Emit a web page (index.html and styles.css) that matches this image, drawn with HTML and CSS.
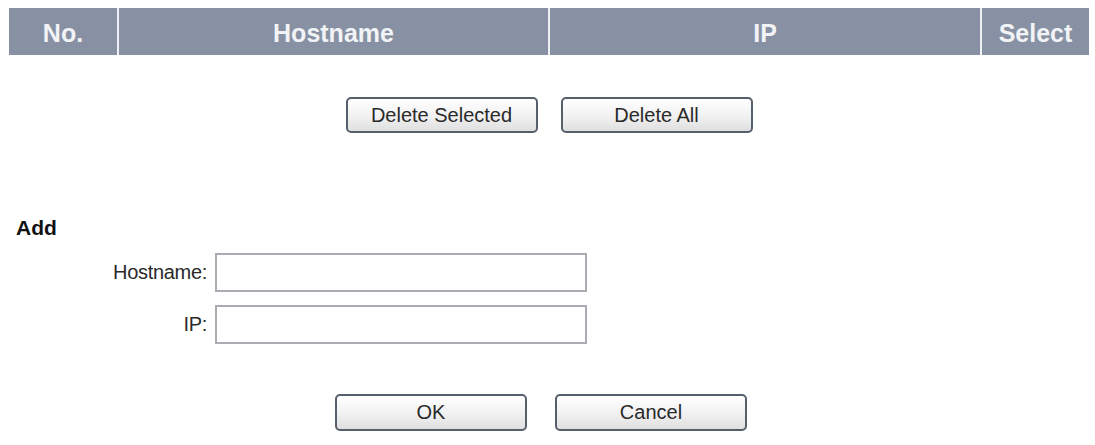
FILE: index.html
```html
<!DOCTYPE html>
<html>
  <head>
    <title>Host Table</title>
    <link rel="stylesheet" href="styles.css">
  </head>
  <body>
    <table id="hostTable">
      <tr class="tableHeader">
        <th class="colNo">No.</th>
        <th class="colHost">Hostname</th>
        <th class="colIp">IP</th>
        <th class="colSelect">Select</th>
      </tr>
    </table>

    <div class="btnRow deleteRow">
      <button class="btn">Delete Selected</button>
      <button class="btn">Delete All</button>
    </div>

    <form id="addForm" action="">
      <h3 class="addTitle">Add</h3>
      <div class="fieldGrid">
        <label for="hostname">Hostname:</label>
        <input id="hostname" autocomplete="off" />
        <label for="ip">IP:</label>
        <input id="ip" autocomplete="off" />
      </div>
      <div class="btnRow okRow">
        <button class="btn" type="button">OK</button>
        <button class="btn" type="button">Cancel</button>
      </div>
    </form>
  </body>
</html>
```

FILE: styles.css
```css
body { margin: 0; padding: 8px 6px 0 9px; background: #fff; color: #222; font-family: "Liberation Sans", Arial, sans-serif; }

#hostTable {
  width: 1080px;
  border-collapse: collapse;
  table-layout: fixed;
}
.tableHeader {
  background-color: #8791a3;
}
.tableHeader th {
  height: 47px;
  padding: 3px 0 0;
  color: #f2f3f6;
  font-size: 25px;
  font-weight: bold;
  text-align: center;
  border-left: 2px solid #eef0f4;
  box-sizing: border-box;
}
.tableHeader th:first-child { border-left: none; }
.colNo { width: 109px; }
.colHost { width: 431px; }
.colIp { width: 432px; }
.colSelect { width: 108px; }

.btnRow { display: flex; justify-content: center; }
.deleteRow { margin-top: 42px; gap: 23px; width: 1080px; }
.okRow { margin-top: 50px; gap: 28px; width: 1080px; padding-right: 16px; box-sizing: border-box; }

.btn {
  width: 192px;
  height: 36px;
  border: 2px solid #56606d;
  border-radius: 5px;
  background: linear-gradient(#ffffff, #f1f1f1 55%, #dfdfe0);
  font-family: "Liberation Sans", Arial, sans-serif;
  font-size: 20px;
  color: #2a2a2a;
  padding: 0;
}
.okRow .btn { height: 37px; }

.addTitle {
  margin: 82px 0 0;
  padding-left: 7px;
  font-size: 21px;
  line-height: 26px;
  font-weight: bold;
  color: #111;
}

.fieldGrid {
  display: grid;
  grid-template-columns: 198px 372px;
  column-gap: 8px;
  row-gap: 13px;
  margin-top: 12px;
  align-items: center;
}
.fieldGrid label {
  text-align: right;
  font-size: 20px;
  letter-spacing: -0.3px;
  color: #2a2a2a;
}
.fieldGrid input {
  height: 39px;
  border: 2px solid #a9adb3;
  box-sizing: border-box;
  padding: 0 6px;
  font-size: 18px;
}
.fieldGrid input:focus { outline: none; }
```
